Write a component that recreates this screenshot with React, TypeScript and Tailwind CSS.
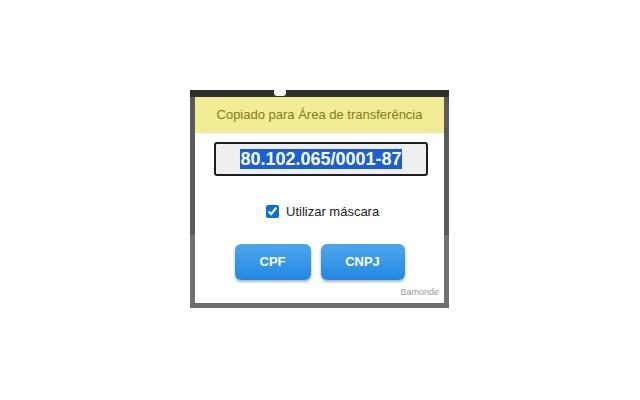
import { useState } from 'react'

// popup de cópia de CPF/CNPJ, desenhado sobre a barra escura do navegador
export default function App() {
  const [mask, setMask] = useState(true)
  const value = '80.102.065/0001-87'

  return (
    <div className="w-[640px] h-[400px] bg-white pt-[90px] pl-[190px]" style={{ fontFamily: '"Liberation Sans", Arial, sans-serif' }}>
      <div className="w-[259px] flex flex-col bg-[#6b6b6b]">
        {/* faixa escura do topo */}
        <div className="h-[7px] flex bg-[#2f2f2f]">
          <div className="w-[84px]" />
          <div className="w-[12px] h-[6px] bg-[#f4f4f4] rounded-b-[3px]" />
        </div>
        <div className="flex">
          <div className="w-[5px] flex flex-col">
            <div className="h-[138px] bg-[#5a5a5a]" />
            <div className="flex-1 bg-[#707070]" />
          </div>
          <div className="w-[249px] h-[206px] bg-white flex flex-col">
            <div className="h-[36px] bg-[#f2ec96] flex items-center justify-center text-[13px] text-[#857a1c]">
              Copiado para Área de transferência
            </div>
            <div className="mt-[9px] ml-[19px] w-[214px] h-[34px] border-2 border-[#1e1e1e] rounded-[3px] bg-[#efefef] flex items-center justify-center">
              <span className="text-[18px] font-bold leading-[20px] bg-[#1a5fd8] text-white">{value}</span>
            </div>
            <label className="mt-[26px] pl-[71px] flex items-center gap-[7px] text-[13px] text-[#222]">
              <input
                type="checkbox"
                checked={mask}
                onChange={e => setMask(e.target.checked)}
                className="w-[13px] h-[13px] accent-[#0b6fe0]"
              />
              Utilizar máscara
            </label>
            <div className="mt-[22px] flex justify-center gap-[10px]">
              <button className="w-[76px] h-[36px] rounded-[6px] bg-gradient-to-b from-[#4ea6ec] to-[#1f88e3] text-white text-[13px] font-bold shadow-[0_2px_3px_rgba(0,0,0,0.3)]">
                CPF
              </button>
              <button className="w-[84px] h-[36px] rounded-[6px] bg-gradient-to-b from-[#4ea6ec] to-[#1f88e3] text-white text-[13px] font-bold shadow-[0_2px_3px_rgba(0,0,0,0.3)]">
                CNPJ
              </button>
            </div>
            <div className="mt-auto mb-[4px] pr-[5px] text-right text-[9px] text-[#9a9a9a]">Bamonde</div>
          </div>
          <div className="w-[5px] flex flex-col">
            <div className="h-[138px] bg-[#5a5a5a]" />
            <div className="flex-1 bg-[#707070]" />
          </div>
        </div>
        <div className="h-[5px] bg-[#6b6b6b]" />
      </div>
    </div>
  )
}
